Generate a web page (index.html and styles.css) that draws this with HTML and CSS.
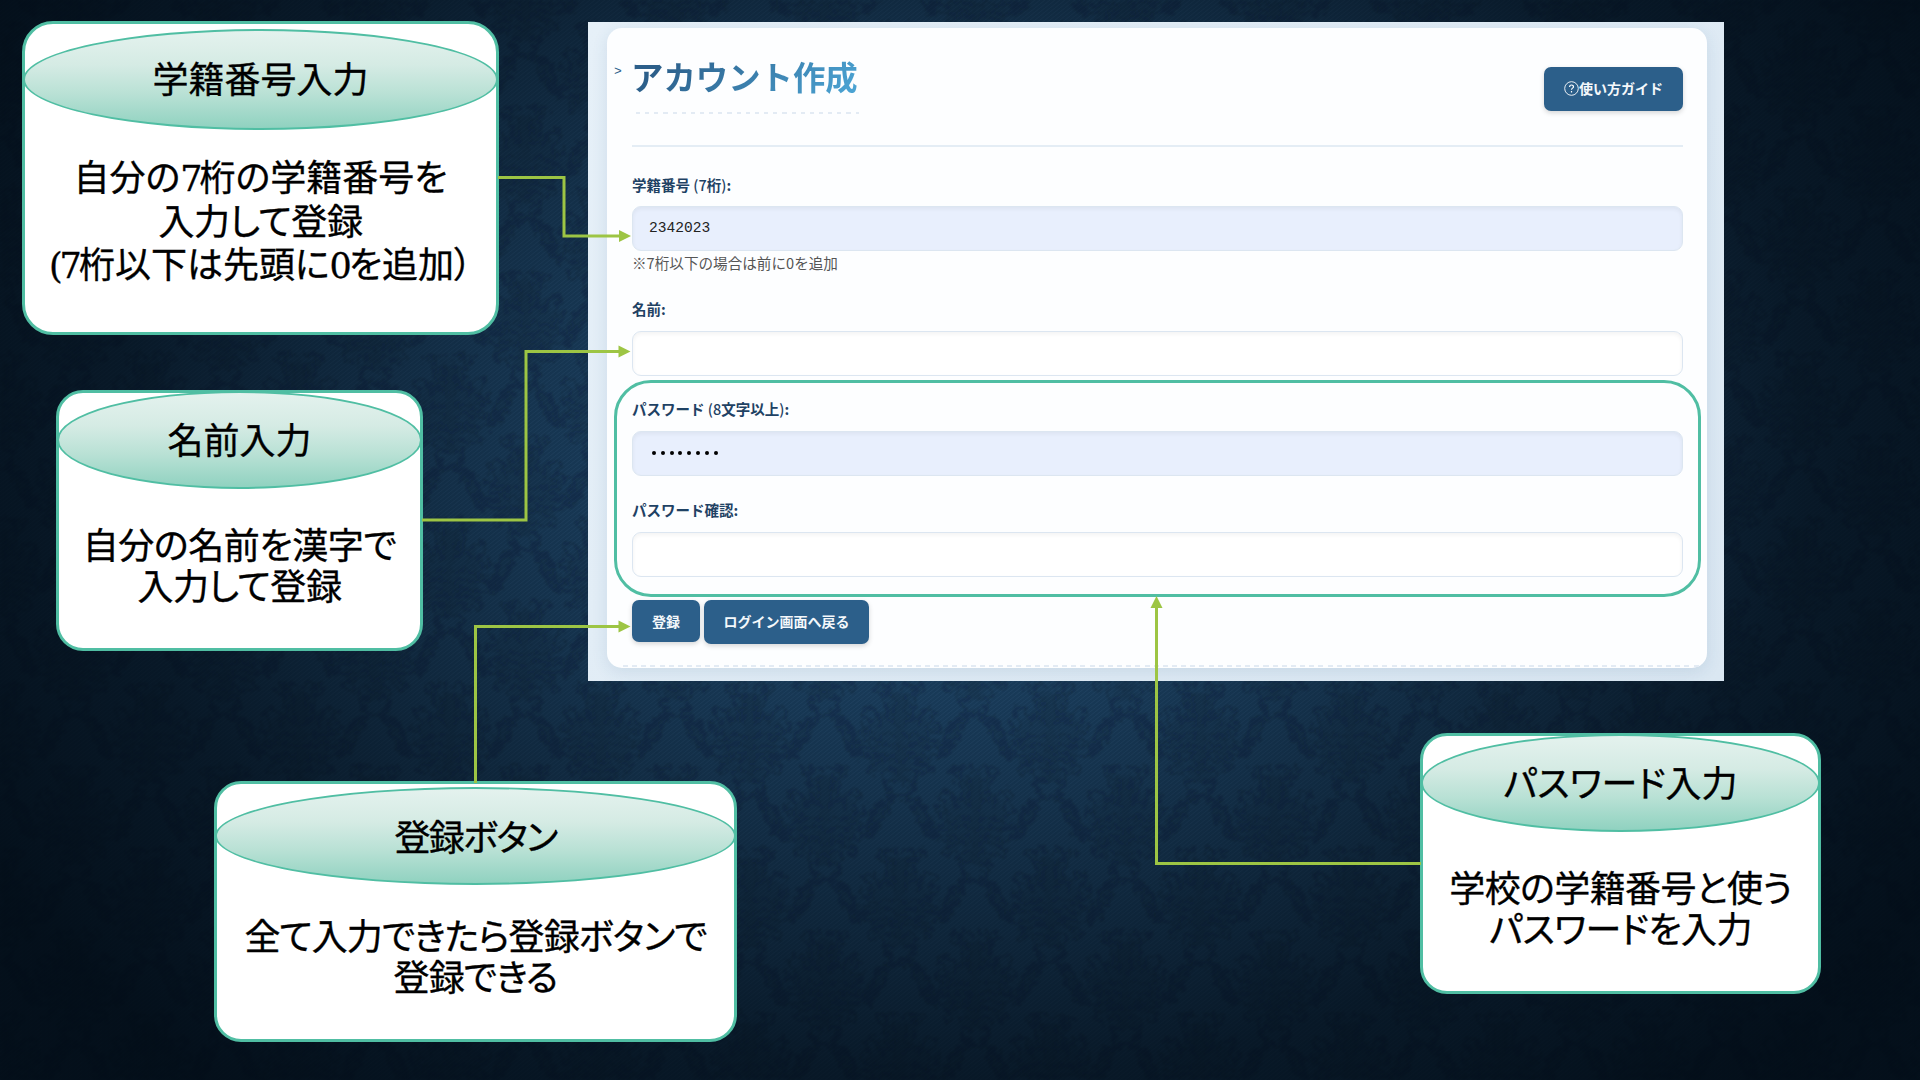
FILE: index.html
```html
<!DOCTYPE html>
<html lang="ja">
<head>
<meta charset="utf-8">
<title>アカウント作成</title>
<link rel="stylesheet" href="styles.css">
</head>
<body>
<main class="slide">
  <svg class="damask" width="1920" height="1080" aria-hidden="true">
    <defs>
      <filter id="lace" x="0" y="0" width="100%" height="100%">
        <feTurbulence type="fractalNoise" baseFrequency=".16" numOctaves="2" seed="4" result="n"/>
        <feDisplacementMap in="SourceGraphic" in2="n" scale="14" xChannelSelector="R" yChannelSelector="G"/>
        <feGaussianBlur stdDeviation=".8"/>
      </filter>
      <pattern id="twill" width="5" height="4" patternUnits="userSpaceOnUse">
        <path d="M0 4L5 0" stroke="#4f86b0" stroke-opacity=".16" stroke-width="1"/>
      </pattern>
      <g id="half" fill="none" stroke="#020d1a" stroke-linecap="round">
        <path stroke-width="3" d="M3 -52C14 -62 20 -46 10 -42M6 -44V-18M12 -50C22 -60 28 -50 20 -46C14 -42 14 -32 12 -22M4 -14C14 -28 24 -18 18 -14M20 -20C24 -38 42 -30 34 -22C28 -18 26 -8 34 -10M38 -16C44 -6 30 -2 26 -6"/>
        <path stroke-width="3" d="M4 -2C18 -10 22 4 36 2M3 10C12 0 22 10 34 8M6 16C16 10 24 22 36 16C44 10 36 4 32 8M2 24C10 14 18 24 28 26C36 30 28 38 22 32M2 34C12 26 20 32 16 38"/>
        <path stroke-width="4" d="M5 42C18 38 16 52 8 52M1 58C8 60 12 54 12 50"/>
        <path stroke-width="4" d="M42 14C46 4 44 -6 54 -14C60 -22 66 -16 62 -12M44 6C54 4 62 -4 58 -8M48 -8C50 -18 62 -26 68 -20M40 18C48 16 52 8 52 2"/>
        <path stroke-width="16" stroke-opacity=".3" d="M4 -40V36M18 -20L22 22M46 8L56 -12"/>
      </g>
      <g id="motif"><use href="#half"/><use href="#half" transform="scale(-1 1)"/></g>
      <pattern id="flowers" x="825" y="739" width="150" height="165" patternUnits="userSpaceOnUse">
        <g opacity=".2">
          <use href="#motif" x="75" y="0"/><use href="#motif" x="75" y="165"/>
          <use href="#motif" x="0" y="82.5"/><use href="#motif" x="150" y="82.5"/>
        </g>
      </pattern>
    </defs>
    <rect width="1920" height="1080" fill="url(#twill)"/>
    <rect width="1920" height="1080" fill="url(#flowers)" filter="url(#lace)"/>
  </svg>
  <div class="shade"></div>

  <section class="capture">
    <div class="panel">
      <header class="head">
        <span class="prompt">&gt;</span>
        <h1 class="title">アカウント作成</h1>
        <a class="btn guide"><svg width="15" height="15" viewBox="0 0 15 15" fill="none" stroke="#fff" aria-hidden="true"><circle cx="7.5" cy="7.5" r="6.8" stroke-width=".9"/><path d="M5.6 6c0-2.7 3.9-2.6 3.9-.2 0 1.300-2 1.400-2 3M7.500 10v1.400" stroke-width="1.200"/></svg>使い方ガイド</a>
      </header>
      <form class="form">
        <div class="field first"><label>学籍番号 <span>(7</span>桁<span>)</span>:</label><div class="input filled">2342023</div><small>※7桁以下の場合は前に0を追加</small></div>
        <div class="field name"><label>名前:</label><div class="input"></div></div>
        <div class="field pass"><label>パスワード <span>(8</span>文字以上<span>)</span>:</label><div class="input filled dots"><i></i><i></i><i></i><i></i><i></i><i></i><i></i><i></i></div></div>
        <div class="field confirm"><label>パスワード確認:</label><div class="input"></div></div>
        <div class="actions"><a class="btn submit">登録</a><a class="btn back">ログイン画面へ戻る</a></div>
      </form>
    </div>
  </section>

  <div class="highlight"></div>

  <article class="note n1">
    <h2 class="oval"><span>学籍番号入力</span></h2>
    <p><span class="l1">自分の<b>7</b>桁の学籍番号を</span><span class="l2">入力して登録</span><span class="l3"><b>(7</b>桁以下は先頭に<b>0</b>を追加）</span></p>
  </article>
  <article class="note n2">
    <h2 class="oval"><span>名前入力</span></h2>
    <p><span class="l1">自分の名前を漢字で</span><span class="l2">入力して登録</span></p>
  </article>
  <article class="note n3">
    <h2 class="oval"><span>登録ボタン</span></h2>
    <p><span class="l1">全て入力できたら登録ボタンで</span><span class="l2">登録できる</span></p>
  </article>
  <article class="note n4">
    <h2 class="oval"><span>パスワード入力</span></h2>
    <p><span class="l1">学校の学籍番号と使う</span><span class="l2">パスワードを入力</span></p>
  </article>

  <svg class="links" width="1920" height="1080" aria-hidden="true">
    <g fill="none" stroke="#9dc544" stroke-width="3">
      <path d="M498 177.500H564V236H620"/>
      <path d="M422 520H526V351.500H620"/>
      <path d="M475.500 783V626.500H620"/>
      <path d="M1421 863.500H1156.500V606"/>
    </g>
    <g fill="#9dc544">
      <path d="M619 230L631 236L619 242Z"/>
      <path d="M618.500 345.500L630.500 351.500L618.500 357.500Z"/>
      <path d="M618.500 620.500L630.500 626.500L618.500 632.500Z"/>
      <path d="M1150.500 608L1156.500 596L1162.500 608Z"/>
    </g>
  </svg>
</main>
</body>
</html>
```
FILE: styles.css
```css
* { box-sizing: border-box; }
body { margin: 0; font-family: "Noto Sans CJK JP", sans-serif; }
.slide { position: relative; width: 1920px; height: 1080px; overflow: hidden; background: #1d4466; }
.damask, .links, .shade { position: absolute; left: 0; top: 0; }
.shade { width: 1920px; height: 1080px; background: radial-gradient(ellipse 1130px 850px at 960px 440px, rgba(0,8,16,.04) 0%, rgba(0,8,16,.17) 30%, rgba(0,8,16,.42) 50%, rgba(0,8,16,.73) 75%, rgba(0,8,16,.88) 100%); }

/* Web form shown in the middle of the slide */
.capture { position: absolute; left: 588px; top: 22px; width: 1136px; height: 659px; padding: 6px 17px 13px 19px; overflow: hidden; background: linear-gradient(135deg, #e6f0f8, #dae7f2); }
.panel { position: relative; height: 640px; padding: 0 24px 0 25px; border-radius: 15px; background: #fdfeff; box-shadow: 0 4px 16px rgba(44,94,138,.12); }
.panel::after { content: ""; position: absolute; left: 16px; right: 8px; bottom: 1px; height: 2px; background: repeating-linear-gradient(90deg, #e3ebf4 0 5px, transparent 5px 9.15px); }
.head { position: relative; display: flex; justify-content: space-between; align-items: flex-start; height: 119px; border-bottom: 2px solid #e4edf5; }
.prompt { position: absolute; left: -18px; top: 34px; font: 13px/20px "Liberation Mono", monospace; color: #2c5f8a; }
.title { margin: 25px 0 0 -1px; width: 228px; height: 61px; font-size: 32.400px; line-height: 46px; font-weight: 700; white-space: nowrap; color: transparent; background: repeating-linear-gradient(90deg, transparent 0 5px, #e3ebf4 5px 9.15px) 0 59px / 228px 2px no-repeat, linear-gradient(135deg, #2c5f8a 15%, #4ba3d3 90%) text; -webkit-background-clip: border-box, text; background-clip: border-box, text; }
.btn { display: flex; align-items: center; justify-content: center; padding-bottom: 1px; border-radius: 7px; background: #2c5f8a; color: #f4f8fb; font-size: 14px; font-weight: 700; line-height: 20px; box-shadow: 0 2px 5px rgba(0,0,0,.16); }
.guide { margin-top: 39px; width: 139px; height: 44px; padding-bottom: 2px; }
.field label { display: block; height: 22px; line-height: 22px; font-size: 14.500px; font-weight: 700; color: #1f4264; white-space: pre; }
.field label span { font-weight: 500; }
.first { padding-top: 27px; height: 151px; }
.name { height: 100px; }
.pass { height: 101px; }
.confirm { height: 101px; }
.input { display: flex; align-items: center; height: 45px; margin-top: 11px; padding: 0 16px 4px; border: 1px solid #dce6f1; border-radius: 9px; background: #fff; box-shadow: inset 0 2px 4px rgba(0,0,0,.05); font: 14.600px "Liberation Mono", monospace; color: #222; }
.first .input { margin-top: 10px; padding-bottom: 2px; }
.filled { background: #e8effd; }
.dots { gap: 4.800px; padding: 0 19px 2px; }
.dots i { width: 4px; height: 4px; border-radius: 50%; background: #000; }
small { display: block; margin-top: 1px; font-size: 14.6px; line-height: 22px; color: #555; white-space: nowrap; }
.actions { display: flex; gap: 4px; align-items: flex-start; }
.submit { width: 68px; height: 42px; }
.back { width: 165px; height: 44px; padding-bottom: 2px; }

.highlight { position: absolute; left: 614px; top: 380px; width: 1087px; height: 217px; border: 3px solid #50bea3; border-radius: 37px; }

/* Callout cards */
.note { position: absolute; border: 3px solid #50bea3; border-radius: 27px; background: #fff; color: #000; text-align: center; font-size: 36px; -webkit-text-stroke: .35px #000; }
.oval { display: flex; justify-content: center; align-items: center; margin: 0 -2px; padding-bottom: 4px; height: 98px; border: 2px solid #50bea3; border-radius: 50%; background: linear-gradient(#e4f2ee 0%, #d5ebe4 35%, #b9e1d5 65%, #90d2c0 100%); font-size: 36px; font-weight: 400; line-height: 40px; }
.note p { margin: 0; display: flex; flex-direction: column; align-items: center; line-height: 41.200px; white-space: nowrap; }
.note span { display: block; font-feature-settings: "palt"; }
.note b { font-family: "DejaVu Serif", serif; font-weight: 400; font-size: 35px; line-height: 1px; letter-spacing: -3px; }
.n1 { left: 22px; top: 21px; width: 477px; height: 314px; border-radius: 31px; }
.n1 .oval { margin-top: 5px; height: 101px; padding-bottom: 5px; }
.n1 p { margin-top: 24px; line-height: 43.500px; }
.n1 .l2 { letter-spacing: -.4px; }
.n2 { left: 56px; top: 390px; width: 367px; height: 261px; }
.n2 .oval, .n4 .oval { margin-top: -2px; }
.n2 p { margin-top: 34px; letter-spacing: -.4px; }
.n3 { left: 214px; top: 781px; width: 523px; height: 261px; }
.n3 .oval { margin-top: 3px; padding-bottom: 2px; letter-spacing: -1.600px; }
.n3 p { margin-top: 29px; letter-spacing: -.9px; }
.n4 { left: 1420px; top: 733px; width: 401px; height: 261px; }
.n4 p { margin-top: 34px; letter-spacing: -.6px; }
```
